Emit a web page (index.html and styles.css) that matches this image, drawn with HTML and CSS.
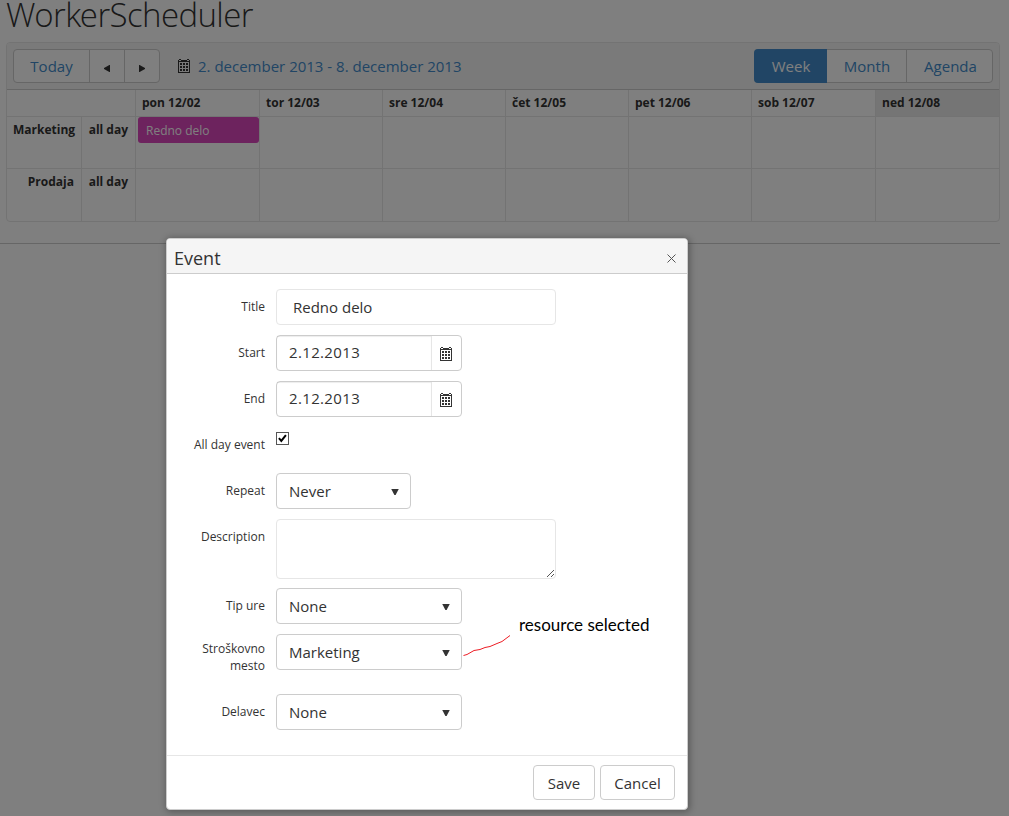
FILE: index.html
```html
<!DOCTYPE html>
<html lang="sl">
<head>
  <meta charset="UTF-8" />
  <meta name="viewport" content="width=device-width, initial-scale=1.0" />
  <title>WorkerScheduler</title>
  <link rel="stylesheet" href="styles.css">
</head>
<body>
  <svg class="sprite" width="0" height="0">
    <symbol id="icon-calendar" viewBox="0 0 12 14" shape-rendering="crispEdges">
      <path fill-rule="evenodd" d="M0 1H1V0H3V1H9V0H11V1H12V14H0ZM1 3V13H11V3ZM1 1V2H3V1ZM9 1V2H11V1Z"/>
      <path d="M2 4h2v2H2zM5 4h2v2H5zM8 4h2v2H8zM2 7h2v2H2zM5 7h2v2H5zM8 7h2v2H8zM2 10h2v2H2zM5 10h2v2H5zM8 10h2v2H8z"/>
    </symbol>
    <symbol id="icon-down" viewBox="0 0 8 6">
      <path d="M0.5 0H7.5V0.6L4.6 6H3.4L0.5 0.6Z"/>
    </symbol>
  </svg>

  <div class="page">
    <h1>WorkerScheduler</h1>
    <!-- Scheduler -->
    <div class="scheduler">
      <div class="toolbar">
        <div class="btn-group nav">
          <a class="today">Today</a>
          <a class="arrow"><svg width="6" height="7" viewBox="0 0 6 7"><path d="M6 0V7H5.4L0 4V3L5.4 0Z"/></svg></a>
          <a class="arrow last"><svg width="6" height="7" viewBox="0 0 6 7"><path d="M0 0V7H0.6L6 4V3L0.6 0Z"/></svg></a>
        </div>
        <svg class="icon" width="12" height="14"><use href="#icon-calendar"/></svg>
        <span class="range">2. december 2013 - 8. december 2013</span>
        <div class="btn-group views">
          <a class="week active">Week</a>
          <a class="month">Month</a>
          <a class="agenda">Agenda</a>
        </div>
      </div>
      <div class="grid">
        <div class="cell corner"></div>
        <div class="cell day">pon 12/02</div>
        <div class="cell day">tor 12/03</div>
        <div class="cell day">sre 12/04</div>
        <div class="cell day">čet 12/05</div>
        <div class="cell day">pet 12/06</div>
        <div class="cell day">sob 12/07</div>
        <div class="cell day current">ned 12/08</div>

        <div class="cell head">Marketing</div>
        <div class="cell head">all day</div>
        <div class="cell slot"><div class="event">Redno delo</div></div>
        <div class="cell"></div>
        <div class="cell"></div>
        <div class="cell"></div>
        <div class="cell"></div>
        <div class="cell"></div>
        <div class="cell"></div>

        <div class="cell head">Prodaja</div>
        <div class="cell head">all day</div>
        <div class="cell"></div>
        <div class="cell"></div>
        <div class="cell"></div>
        <div class="cell"></div>
        <div class="cell"></div>
        <div class="cell"></div>
        <div class="cell"></div>
      </div>
    </div>
    <hr>
  </div>

  <div class="overlay"></div>

  <!-- Event window -->
  <div class="window">
    <div class="window-title">
      <span>Event</span>
      <svg class="close" width="9" height="9" viewBox="0 0 9 9"><path d="M0.5 0.5L8.5 8.5M8.5 0.5L0.5 8.5"/></svg>
    </div>
    <div class="form">
      <div class="row">
        <label>Title</label>
        <div class="textbox">Redno delo</div>
      </div>
      <div class="row">
        <label>Start</label>
        <div class="picker"><span>2.12.2013</span><i><svg width="12" height="14"><use href="#icon-calendar"/></svg></i></div>
      </div>
      <div class="row">
        <label>End</label>
        <div class="picker"><span>2.12.2013</span><i><svg width="12" height="14"><use href="#icon-calendar"/></svg></i></div>
      </div>
      <div class="row">
        <label>All day event</label>
        <div class="checkbox"><svg width="9" height="9" viewBox="0 0 9 9"><path d="M0.9 4.2L3.3 6.9L7.9 1.2"/></svg></div>
      </div>
      <div class="row">
        <label>Repeat</label>
        <div class="dropdown short"><span>Never</span><svg width="8" height="6"><use href="#icon-down"/></svg></div>
      </div>
      <div class="row description">
        <label>Description</label>
        <div class="textarea"><svg width="7" height="7" viewBox="0 0 7 7"><path d="M0 7L7 0M4 7L7 4"/></svg></div>
      </div>
      <div class="row">
        <label>Tip ure</label>
        <div class="dropdown"><span>None</span><svg width="8" height="6"><use href="#icon-down"/></svg></div>
      </div>
      <div class="row double">
        <label>Stroškovno mesto</label>
        <div class="dropdown"><span>Marketing</span><svg width="8" height="6"><use href="#icon-down"/></svg></div>
      </div>
      <div class="row">
        <label>Delavec</label>
        <div class="dropdown"><span>None</span><svg width="8" height="6"><use href="#icon-down"/></svg></div>
      </div>
    </div>
    <div class="buttons">
      <a class="save">Save</a>
      <a class="cancel">Cancel</a>
    </div>
    <!-- Note beside the resource field -->
    <svg class="note-line" width="48" height="22" viewBox="0 0 48 22"><path d="M0.5 20.5L4 19.5L11 15.5L17 14.5L22 12.5L27 11.5L34 8.5L39 6.5L43 3.5L47 0.5"/></svg>
    <div class="note">resource selected</div>
  </div>
</body>
</html>
```
FILE: styles.css
```css
/* Global Styles */
* {
  box-sizing: border-box;
}
html, body {
  margin: 0;
  height: 100%;
  overflow: hidden;
  font-family: "Open Sans", "Noto Sans", sans-serif;
  font-size: 15px;
  color: #333;
  background: #fff;
}
svg {
  display: block;
  fill: currentColor;
}
.sprite {
  position: absolute;
}
.page {
  width: 1000px;
}
h1 {
  margin: 0;
  padding-left: 6px;
  height: 42px;
  line-height: 29px;
  font-family: "Open Sans Light", "Open Sans", sans-serif;
  font-size: 33px;
  font-weight: 300;
  letter-spacing: -0.6px;
}
hr {
  margin: 21px 0 0;
  border: 0;
  border-top: 1px solid #ccc;
}
/* Scheduler */
.scheduler {
  margin-left: 6px;
  border: 1px solid #e6e6e6;
  border-radius: 4px;
  overflow: hidden;
}
.toolbar {
  display: flex;
  align-items: center;
  height: 47px;
  padding: 0 6px;
  background: #f5f5f5;
  border-bottom: 1px solid #ccc;
}
.btn-group {
  display: flex;
  height: 34px;
  border: 1px solid #ccc;
  border-radius: 4px;
  background: #fff;
  color: #428bca;
}
.btn-group a {
  display: flex;
  align-items: center;
  justify-content: center;
  border-right: 1px solid #ccc;
}
.btn-group a:last-child {
  border-right: 0;
}
.today {
  width: 76px;
}
.btn-group .arrow {
  width: 35px;
  padding-top: 4px;
  color: #333;
}
.btn-group .last {
  width: 34px;
}
.icon {
  margin: 0 8px 0 18px;
}
.range {
  color: #428bca;
}
.views {
  margin-left: auto;
}
.week {
  width: 73px;
}
.month {
  width: 80px;
  padding-left: 1px;
}
.agenda {
  width: 85px;
  padding-left: 2px;
}
.views .active {
  background: #428bca;
  color: #fff;
  margin: -1px 0 -1px -1px;
  padding-left: 1px;
  border: 0;
  border-radius: 4px 0 0 4px;
}
.grid {
  display: grid;
  grid-template-columns: 75px 54px 124px repeat(4, 123px) 124px 1fr;
  grid-template-rows: 27px 52px 52px;
  font-size: 12px;
}
.cell {
  border-right: 1px solid #e6e6e6;
  border-bottom: 1px solid #e6e6e6;
}
.cell:nth-child(8), .cell:nth-child(9n + 8) {
  border-right: 0;
}
.cell:nth-child(n + 18) {
  border-bottom: 0;
}
.corner {
  grid-column: span 2;
}
.day, .head {
  font-weight: 700;
  line-height: 26px;
  padding: 0 6px;
}
.head {
  padding-right: 7px;
  text-align: right;
  white-space: nowrap;
}
.current {
  background: #ebebeb;
}
.slot {
  padding: 0 0 0 2px;
}
.event {
  width: 121px;
  height: 26px;
  padding-left: 8px;
  line-height: 27px;
  border-radius: 3px;
  background: #da46bc;
  color: #fff;
}
.overlay {
  position: absolute;
  inset: 0;
  background: rgba(0, 0, 0, 0.5);
}
/* Event window */
.window {
  position: absolute;
  left: 166px;
  top: 238px;
  width: 522px;
  height: 572px;
  display: flex;
  flex-direction: column;
  background: #fff;
  border: 1px solid #ccc;
  border-radius: 4px;
  box-shadow: 1px 1px 7px 1px rgba(0, 0, 0, 0.3);
}
.window-title {
  display: flex;
  align-items: center;
  justify-content: space-between;
  height: 35px;
  padding: 4px 11px 0 7px;
  background: #f5f5f5;
  border-bottom: 1px solid #ccc;
  border-radius: 3px 3px 0 0;
  font-size: 18px;
}
.close {
  stroke: #555;
}
.form {
  flex: 1;
  padding: 15px 0 0;
}
.row {
  display: flex;
  height: 46px;
}
.row label {
  width: 98px;
  margin-right: 11px;
  padding-top: 9px;
  font-size: 12px;
  line-height: 17px;
  text-align: right;
}
.row.description {
  height: 69px;
}
.row.double {
  height: 60px;
}
.double label {
  padding: 6px 0 0 20px;
}
.textbox, .textarea {
  width: 280px;
  height: 36px;
  padding-left: 16px;
  line-height: 35px;
  border: 1px solid #e6e6e6;
  border-radius: 4px;
}
.textarea {
  display: flex;
  align-items: flex-end;
  justify-content: flex-end;
  height: 60px;
  padding: 1px;
}
.textarea svg {
  stroke: #555;
}
.picker, .dropdown {
  display: flex;
  width: 186px;
  height: 36px;
  border: 1px solid #ccc;
  border-radius: 4px;
}
.picker span {
  width: 155px;
  padding-left: 12px;
  line-height: 33px;
  letter-spacing: 0.35px;
  border-right: 1px solid #e6e6e6;
  box-shadow: inset 0 1px 1px rgba(0, 0, 0, 0.075);
}
.picker i {
  padding: 11px 0 0 8px;
}
.dropdown {
  justify-content: space-between;
  padding: 0 11px 0 12px;
  line-height: 35px;
}
.dropdown svg {
  margin-top: 15px;
}
.short {
  width: 135px;
}
.checkbox {
  width: 13px;
  height: 13px;
  margin-top: 5px;
  padding: 1px;
  border: 1px solid #555;
}
.checkbox path {
  fill: none;
  stroke: #000;
  stroke-width: 2;
}
.buttons {
  display: flex;
  justify-content: flex-end;
  gap: 5px;
  height: 54px;
  padding: 9px 12px;
  border-top: 1px solid #e6e6e6;
}
.buttons a {
  height: 35px;
  line-height: 35px;
  text-align: center;
  border: 1px solid #ccc;
  border-radius: 4px;
}
.save {
  width: 62px;
}
.cancel {
  width: 75px;
}
.note {
  position: absolute;
  left: 352px;
  top: 375px;
  font-family: Lato, "Open Sans", sans-serif;
  font-size: 17px;
  line-height: 22px;
  color: #000;
}
.note-line {
  position: absolute;
  left: 296px;
  top: 396px;
  fill: none;
  stroke: #ed1c24;
}
```
